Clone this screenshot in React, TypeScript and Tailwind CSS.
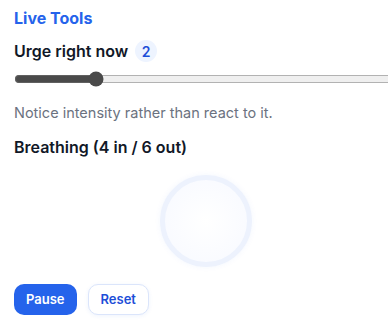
import React, { useState } from "react";

const App = () => {
  const [urge, setUrge] = useState(2);
  const [running, setRunning] = useState(true);

  return (
    <div
      className="w-[412px] bg-white px-[14px] pt-[6px] text-[#111827]"
      style={{ fontFamily: "Inter, 'Noto Sans', sans-serif" }}
    >
      {/* Header */}
      <h2 className="text-[16px] font-bold leading-6 text-[#2563eb]">Live Tools</h2>

      {/* Urge slider */}
      <div className="mt-[9px] flex items-center gap-[7px]">
        <span className="text-[16px] font-semibold leading-6">Urge right now</span>
        <span className="flex h-[22px] min-w-[22px] items-center justify-center rounded-full bg-[#eef4ff] px-[6px] text-[14px] font-semibold text-[#1d4ed8]">
          {urge}
        </span>
      </div>
      <input
        type="range"
        min={0}
        max={10}
        value={urge}
        onChange={(e) => setUrge(Number(e.target.value))}
        className="mt-[8px] block w-full accent-[#4a4a4a]"
      />
      <p className="mt-[16px] text-[14.5px] leading-5 text-[#6b7280]">
        Notice intensity rather than react to it.
      </p>

      {/* Breathing */}
      <h3 className="mt-[12px] text-[16px] font-semibold leading-6">Breathing (4 in / 6 out)</h3>
      <div className="flex h-[124px] items-center justify-center">
        <div className="h-[92px] w-[92px] rounded-full border-[5px] border-[#edf2fd] bg-[radial-gradient(circle,#ffffff_0%,#f7f9ff_100%)] shadow-[0_0_6px_rgba(37,99,235,0.05)]" />
      </div>

      {/* Controls */}
      <div className="mt-[1px] flex gap-[11px] pb-[14px]">
        <button
          onClick={() => setRunning(!running)}
          className="h-[31px] rounded-[10px] bg-[#2563eb] px-[12px] text-[13px] font-semibold text-white"
        >
          {running ? "Pause" : "Start"}
        </button>
        <button
          onClick={() => setUrge(2)}
          className="h-[31px] rounded-[10px] border border-[#dbe5fb] bg-white px-[12px] text-[13px] font-semibold text-[#1d4ed8] shadow-[0_1px_4px_rgba(37,99,235,0.08)]"
        >
          Reset
        </button>
      </div>
    </div>
  );
};

export default App;
